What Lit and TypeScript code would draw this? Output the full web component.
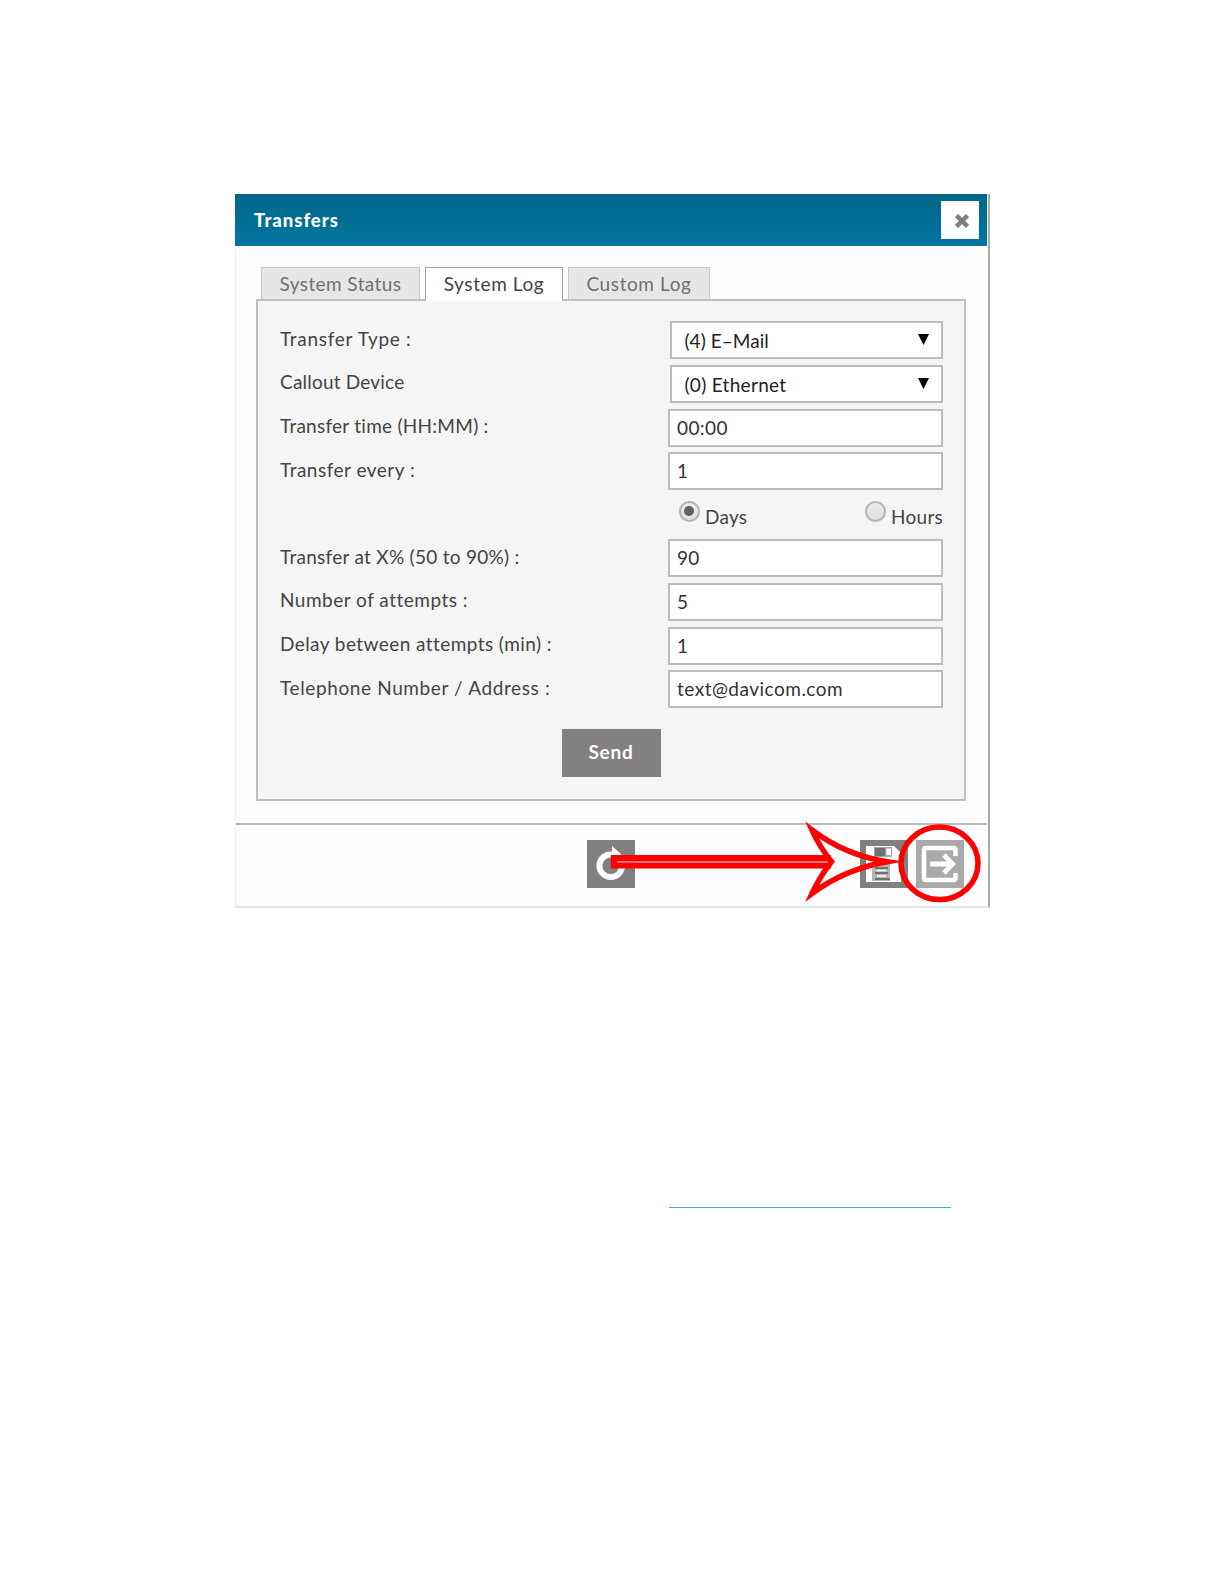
import { LitElement, css, html, svg } from 'lit';
import { customElement, property } from 'lit/decorators.js';
import { classMap } from 'lit/directives/class-map.js';
import { styleMap } from 'lit/directives/style-map.js';

interface Field {
  label: string;
  value: string;
  kind: 'select' | 'text' | 'period';
  // letter spacing in px: [label, value]
  tracking: [number, number];
}

const FIELDS: Field[] = [
  { label: 'Transfer Type :', value: '(4) E–Mail', kind: 'select', tracking: [0.7, 0.05] },
  { label: 'Callout Device', value: '(0) Ethernet', kind: 'select', tracking: [0.2, 0.3] },
  { label: 'Transfer time (HH:MM) :', value: '00:00', kind: 'text', tracking: [0.26, 0.4] },
  { label: 'Transfer every :', value: '1', kind: 'text', tracking: [0.5, 0] },
  { label: '', value: 'Days', kind: 'period', tracking: [0, 0.25] },
  { label: 'Transfer at X% (50 to 90%) :', value: '90', kind: 'text', tracking: [0.28, 0.3] },
  { label: 'Number of attempts :', value: '5', kind: 'text', tracking: [0.5, 0] },
  { label: 'Delay between attempts (min) :', value: '1', kind: 'text', tracking: [0.43, 0] },
  { label: 'Telephone Number / Address :', value: 'text@davicom.com', kind: 'text', tracking: [0.62, 0.5] },
];

const TABS = ['System Status', 'System Log', 'Custom Log'];

@customElement('transfer-field')
class TransferField extends LitElement {
  static styles = css`
    :host {
      display: flex;
      justify-content: space-between;
      height: 43.6px;
    }

    .label {
      padding: 4.5px 0 0 1px;
      line-height: 26px;
      color: #444;
      white-space: pre;
    }

    .box {
      box-sizing: border-box;
      display: flex;
      justify-content: space-between;
      width: 275px;
      height: 38px;
      padding: 0 7px;
      border: 2px solid #bcbcbc;
      background: #fff;
      color: #333;
      line-height: 34px;
    }

    .box_select {
      width: 273.5px;
      padding: 1px 12px 0 13px;
      color: #222;
    }

    .caret {
      width: 11px;
      height: 11px;
      margin-top: 10px;
      fill: #000;
    }

    .period {
      display: flex;
      justify-content: space-between;
      width: 265px;
      color: #444;
    }

    .option {
      display: flex;
      gap: 5.5px;
      line-height: 42px;
    }

    .radio {
      box-sizing: border-box;
      display: grid;
      place-items: center;
      width: 21px;
      height: 21px;
      margin: 5px 0 0 0.5px;
      border: 2px solid #b4b4b4;
      border-radius: 50%;
      background: linear-gradient(#ececec, #dedede);
    }

    .radio_on::after {
      content: '';
      width: 10px;
      height: 10px;
      border-radius: 50%;
      background: #606060;
    }
  `;

  @property({ attribute: false }) field!: Field;

  renderControl() {
    const { kind, value, tracking } = this.field;
    const spacing = styleMap({ letterSpacing: `${tracking[1]}px` });
    if (kind === 'period') {
      return html`
        <div class="period" style=${spacing}>
          ${['Days', 'Hours'].map(
            (name) => html`
              <span class="option">
                <span class=${classMap({ radio: true, radio_on: name === value })}></span>
                <span>${name}</span>
              </span>
            `
          )}
        </div>
      `;
    }
    return html`
      <div class=${classMap({ box: true, box_select: kind === 'select' })}>
        <span style=${spacing}>${value}</span>
        ${kind === 'select'
          ? html`<svg class="caret" viewBox="0 0 11 11"><path d="M0 0H11L5.5 11Z" /></svg>`
          : ''}
      </div>
    `;
  }

  render() {
    const { label, tracking } = this.field;
    return html`
      <span class="label" style=${styleMap({ letterSpacing: `${tracking[0]}px` })}>${label}</span>
      ${this.renderControl()}
    `;
  }
}

@customElement('app-root')
class AppRoot extends LitElement {
  static styles = css`
    :host {
      display: block;
      box-sizing: border-box;
      height: 1584px;
      padding: 194px 0 0 235px;
      background: #fff;
      font: 19px Lato, 'Liberation Sans', sans-serif;
      letter-spacing: 0.6px;
    }

    /* Dialog */
    .dialog {
      position: relative;
      box-sizing: border-box;
      display: flex;
      flex-direction: column;
      width: 755px;
      height: 714px;
      border-left: 1px solid #f0f0f0;
      border-right: 2px solid #a9acaf;
      border-bottom: 2px solid #e2e7e6;
      background: #fdfdfd;
    }

    .header {
      box-sizing: border-box;
      display: flex;
      justify-content: space-between;
      width: 752px;
      height: 52px;
      margin-left: -1px;
      padding: 7px 8px 0 19px;
      background: linear-gradient(#006687, #0076a2);
    }

    .title {
      color: #fff;
      font-size: 18.5px;
      font-weight: 900;
      line-height: 39px;
      letter-spacing: 1px;
    }

    .close {
      display: grid;
      place-items: center;
      width: 38px;
      height: 38px;
      background: #fff;
    }

    .close__icon {
      width: 14px;
      height: 14px;
      margin: 2px 0 0 3px;
      stroke: #808080;
      stroke-width: 4.5;
    }

    /* Tabs */
    .body {
      box-sizing: border-box;
      display: flex;
      flex-direction: column;
      height: 577px;
      padding: 21px 20px 0;
    }

    .tabs {
      display: flex;
      gap: 5px;
      padding-left: 5px;
    }

    .tab {
      box-sizing: border-box;
      width: 159px;
      height: 32px;
      border: 1px solid #c8c8c8;
      border-bottom: 0;
      background: #e6e6e6;
      color: #717171;
      line-height: 31px;
      text-align: center;
      letter-spacing: 0.4px;
    }

    .tab_last {
      width: 142px;
      letter-spacing: 0.6px;
    }

    .tab_active {
      z-index: 1;
      width: 138px;
      height: 34px;
      margin-bottom: -2px;
      border-color: #a6a6a6;
      background: #fff;
      color: #444;
      letter-spacing: 0.6px;
    }

    .panel {
      box-sizing: border-box;
      display: flex;
      flex-direction: column;
      width: 710px;
      height: 502px;
      padding: 20.4px 21px 0;
      border: 2px solid #bfbfbf;
      background: #f5f5f5;
    }

    .send {
      align-self: center;
      width: 99px;
      height: 48px;
      margin: 15.6px 0 0;
      background: #838081;
      color: #fff;
      font-weight: 700;
      line-height: 46px;
      text-align: center;
      letter-spacing: 0.8px;
    }

    /* Footer */
    .footer {
      box-sizing: border-box;
      display: flex;
      width: 751px;
      padding: 15px 23px 0 351px;
      border-top: 2px solid #bbb;
    }

    .tool {
      width: 48px;
      height: 48px;
      background: #808080;
    }

    .tool_save {
      margin-left: auto;
    }

    .tool_exit {
      margin-left: 8px;
      background: #aaa;
    }

    .callout {
      position: absolute;
      left: 364px;
      top: 616px;
      width: 400px;
      height: 100px;
      fill: none;
      stroke: #fe0000;
      stroke-width: 5.5;
    }

    .link {
      width: 282px;
      height: 1px;
      margin: 299px 0 0 434px;
      background: #45b0c4;
    }
  `;

  renderTools() {
    return html`
      <svg class="tool" viewBox="0 0 48 48">
        <path d="M25 14.5A11.3 11.3 0 1 0 35 25" fill="none" stroke="#fff" stroke-width="6" />
        <path d="M25 6L37 17L25 23Z" fill="#fff" />
      </svg>
      <svg class="tool tool_save" viewBox="0 0 48 48">
        <path d="M6 6H34L41 13V42H6Z" fill="#fff" />
        <path d="M14 7H32V17H14Z" fill="#a5a5a5" />
        <path d="M15 8H25V16H15Z" fill="#707070" />
        <path d="M26.5 8.5H31V15H26.5Z" fill="#fff" />
        <path d="M12 24H30V41H12Z" fill="#b5b5b5" />
        <path d="M15 28H28M15 33H28M15 39H30" stroke="#707070" stroke-width="2.2" />
        <path d="M17 30.5H26M17 36H26" stroke="#fff" stroke-width="1.5" />
      </svg>
      <svg class="tool tool_exit" viewBox="0 0 48 48">
        <g fill="none" stroke="#fff">
          <path
            d="M39.5 16V10Q39.5 8 37.5 8H10Q8 8 8 10V38Q8 40 10 40H37.5Q39.5 40 39.5 38V33"
            stroke-width="4.5"
          />
          <path d="M14 24H37M28 15L36.5 24L28 33" stroke-width="4.8" />
        </g>
      </svg>
    `;
  }

  // red arrow and ring lying over the footer buttons
  renderCallout() {
    return html`
      <svg class="callout" viewBox="600 810 400 100">
        ${svg`
          <path d="M831 857.9H613.8V865.5H831" stroke-width="6" />
          <path d="M617 861.7H829" stroke="#ff7474" stroke-width="1.6" />
          <path
            d="M812 830Q845 855 887 861.7Q845 869 812 893.5Q819 878 831.5 861.7Q819 846 812 830Z"
            stroke-miterlimit="10"
          />
          <ellipse cx="939.5" cy="863.3" rx="38.5" ry="36.3" />
        `}
      </svg>
    `;
  }

  render() {
    return html`
      <div class="dialog">
        <div class="header">
          <span class="title">Transfers</span>
          <span class="close">
            <svg class="close__icon" viewBox="0 0 14 14">
              <path d="M1.5 1.5L12.5 12.5M12.5 1.5L1.5 12.5" />
            </svg>
          </span>
        </div>
        <div class="body">
          <div class="tabs">
            ${TABS.map(
              (tab, i) => html`
                <span class=${classMap({ tab: true, tab_active: i === 1, tab_last: i === 2 })}>${tab}</span>
              `
            )}
          </div>
          <div class="panel">
            ${FIELDS.map((field) => html`<transfer-field .field=${field}></transfer-field>`)}
            <div class="send">Send</div>
          </div>
        </div>
        <div class="footer">${this.renderTools()}</div>
        ${this.renderCallout()}
      </div>
      <div class="link"></div>
    `;
  }
}
